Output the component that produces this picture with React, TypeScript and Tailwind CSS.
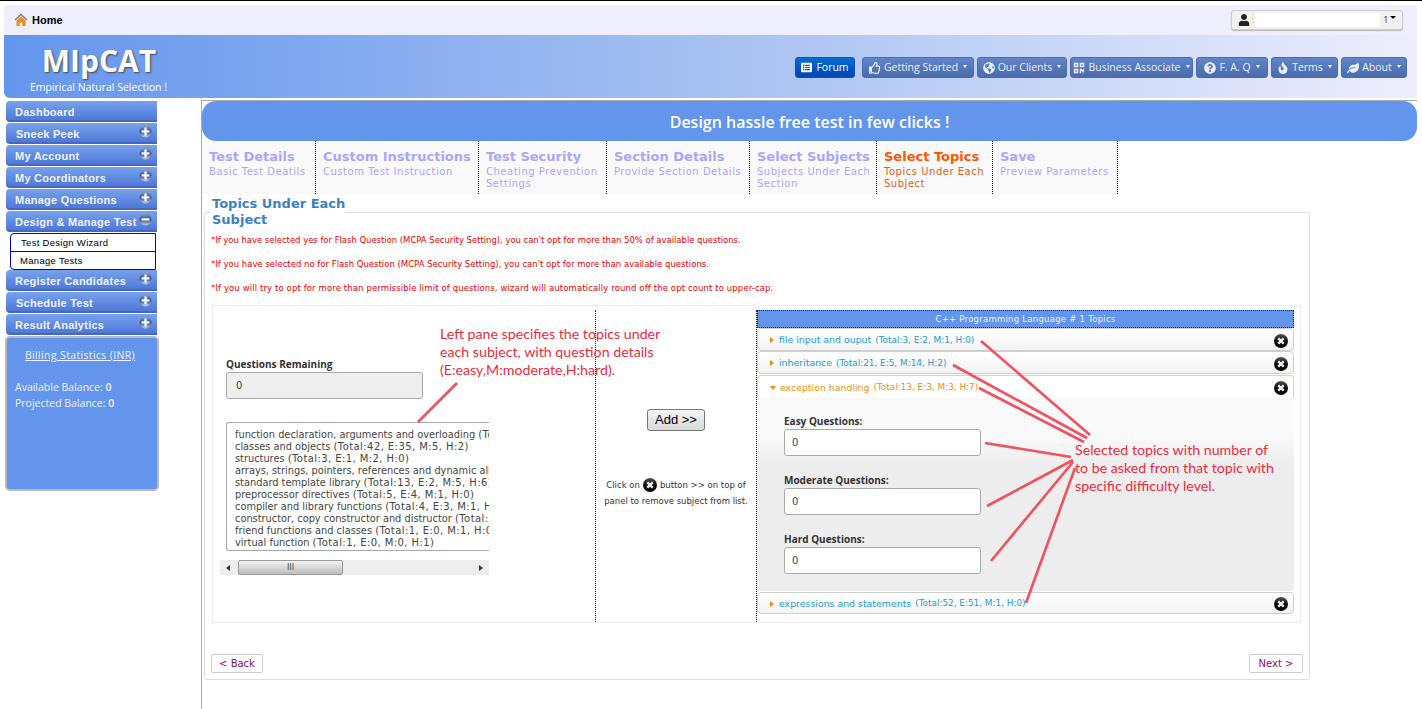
import React from "react";
import { FaUser, FaRegThumbsUp, FaGlobeAmericas, FaQrcode, FaQuestionCircle, FaFire, FaLeaf, FaListAlt } from "react-icons/fa";

const Glyph = ({ minus }: { minus?: boolean }) => (
  <svg width="13" height="13" viewBox="0 0 13 13" className="mt-[-3px] shrink-0">
    <defs>
      <linearGradient id={minus ? "gm" : "gp"} x1="0" y1="0" x2="0" y2="1">
        <stop offset="0" stopColor="#8ea6cf" />
        <stop offset="0.5" stopColor="#2f4f86" />
        <stop offset="1" stopColor="#c5d3ea" />
      </linearGradient>
    </defs>
    <circle cx="6.5" cy="6.5" r="6" fill={`url(#${minus ? "gm" : "gp"})`} />
    <rect x="2.5" y="5.3" width="8" height="2.2" fill="#fff" />
    {!minus && <rect x="5.4" y="2.5" width="2.2" height="8" fill="#fff" />}
  </svg>
);

const MenuItem = ({ label, icon, indent }: { label: string; icon?: "plus" | "minus"; indent?: boolean }) => (
  <div className="flex h-[21px] w-[151px] items-center justify-between rounded-l-[4px] border-b-2 border-[#4468c4] bg-gradient-to-b from-[#78a2ec] to-[#4f78d8] pr-[5px] text-[11px] font-bold text-[#eef3ff] font-['Liberation_Sans',sans-serif] tracking-[0.25px]">
    <span className={`pt-[4px] ${indent ? "pl-[10px]" : "pl-[9px]"}`}>{label}</span>
    {icon && <Glyph minus={icon === "minus"} />}
  </div>
);

const NavButton = ({ icon, label, w }: { icon: React.ReactNode; label: string; w: string }) => (
  <div className={`flex h-[21px] ${w} items-center justify-center gap-[3px] rounded-[3px] border border-[#4a6cae] bg-gradient-to-b from-[#6085c8] to-[#4a6bac] text-[10.5px] text-[#e8effb] font-['Open_Sans',sans-serif]`}>
    {icon}
    <span>{label}</span>
    <span className="ml-[2px] mb-[3px] h-0 w-0 border-x-[2.5px] border-t-[3px] border-x-transparent border-t-white" />
  </div>
);

const Tab = ({ title, sub, w, active }: { title: string; sub: React.ReactNode; w: string; active?: boolean }) => (
  <div className={`${w} h-full shrink-0 border-r border-dotted border-black pl-[7px] pt-[8px] font-['DejaVu_Sans',sans-serif]`}>
    <div className={`text-[13px] font-bold leading-[16px] ${active ? "text-[#ff5500]" : "text-[#aaa6ff]"}`}>{title}</div>
    <div className={`mt-px text-[10px] leading-[12px] tracking-[0.52px] ${active ? "text-[#e2601a]" : "text-[#aaa6ff]"}`}>{sub}</div>
  </div>
);

const CloseIcon = ({ size = 14 }: { size?: number }) => (
  <svg width={size} height={size} viewBox="0 0 14 14" className="shrink-0">
    <defs>
      <linearGradient id="closeGloss" x1="0" y1="0" x2="0" y2="1">
        <stop offset="0" stopColor="#555" />
        <stop offset="0.45" stopColor="#111" />
        <stop offset="1" stopColor="#000" />
      </linearGradient>
    </defs>
    <circle cx="7" cy="7" r="7" fill="url(#closeGloss)" />
    <path d="M4.3 4.3 9.7 9.7M9.7 4.3 4.3 9.7" stroke="#eee" strokeWidth="2.4" />
  </svg>
);

const Row = ({ name, stats, open, h = "h-[23px]" }: { name: string; stats: string; open?: boolean; h?: string }) => (
  <div className={`flex ${h} items-center justify-between pl-[12px] pr-[5px] pt-[2px] border font-['DejaVu_Sans',sans-serif] ${open ? "rounded-t-[4px] border-b-0 border-[#f5d76a] bg-white text-[#ef8f0a]" : "rounded-[4px] border-[#cfcfcf] bg-gradient-to-b from-white to-[#f3f3f3] text-[#1b9cd8]"}`}>
    <div className="flex items-center">
      {open ? (
        <span className="mr-[4px] h-0 w-0 border-x-[3.5px] border-t-[4px] border-x-transparent border-t-[#ee8c10]" />
      ) : (
        <span className="mr-[5px] h-0 w-0 border-y-[3.5px] border-l-[4px] border-y-transparent border-l-[#ee8c10]" />
      )}
      <span className="text-[9.4px]">{name}</span>
      <span className="ml-[4px] text-[8.9px] font-medium">{stats}</span>
    </div>
    <CloseIcon />
  </div>
);

const Field = ({ label, mt }: { label: string; mt: string }) => (
  <div className={mt}>
    <div className="text-[10px] font-bold leading-[12px] text-[#333] font-['Open_Sans',sans-serif]">{label}</div>
    <div className="mt-[2px] flex h-[27px] w-[197px] items-center rounded-[3px] border border-[#aaa] bg-white pl-[7px] text-[10px] text-[#444] font-['DejaVu_Sans',sans-serif]">0</div>
  </div>
);

const topics: [string, string][] = [
  ["function declaration, arguments and overloading", "(Total:17, E:9, M:6, H:2)"],
  ["classes and objects", "(Total:42, E:35, M:5, H:2)"],
  ["structures", "(Total:3, E:1, M:2, H:0)"],
  ["arrays, strings, pointers, references and dynamic allocation", "(Total:9)"],
  ["standard template library", "(Total:13, E:2, M:5, H:6)"],
  ["preprocessor directives", "(Total:5, E:4, M:1, H:0)"],
  ["compiler and library functions", "(Total:4, E:3, M:1, H:0)"],
  ["constructor, copy constructor and distructor", "(Total:7, E:3)"],
  ["friend functions and classes", "(Total:1, E:0, M:1, H:0)"],
  ["virtual function", "(Total:1, E:0, M:0, H:1)"],
  ["operator overloading and type conversion", "(Total:2)"],
];

const sideTop: [string, "plus" | undefined, boolean?][] = [
  ["Dashboard", undefined],
  ["Sneek Peek", "plus", true],
  ["My Account", "plus"],
  ["My Coordinators", "plus"],
  ["Manage Questions", "plus"],
];

export default function App() {
  return (
    <div className="relative h-[709px] w-[1422px] overflow-hidden bg-white">
      <div className="h-px bg-black" />
      <div className="mx-[4px] mt-[4px] mr-[5px]">
        {/* Home bar */}
        <div className="flex h-[30px] items-center justify-between rounded-tl-[5px] bg-[#eeeefc] pl-[10px] pr-[14px]">
          <div className="flex items-center gap-[4px]">
            <svg width="14" height="14" viewBox="0 0 14 14">
              <path d="M1 7 7 1.5 13 7" fill="none" stroke="#7d7d7d" strokeWidth="1.5" />
              <path d="M2.5 7.5 7 3.5 11.5 7.5V13H8.3V9.5H5.7V13H2.5Z" fill="#f58a1f" />
            </svg>
            <span className="text-[11px] font-bold text-black font-['Liberation_Sans',sans-serif]">Home</span>
          </div>
          <div className="flex h-[20px] w-[172px] items-center rounded-[3px] border border-[#ccc] bg-[#f1f1f1] pl-[6px] shadow-[0_1px_1px_#bbb]">
            <FaUser className="h-[12px] w-[12px] text-[#222]" />
            <span className="ml-[2px] text-[8px] leading-none text-[#e2801a]">:</span>
            <span className="ml-[1px] h-[14px] w-[125px] bg-white" />
            <span className="ml-auto text-[8px] leading-none text-[#333]">1</span>
            <span className="ml-[2px] mr-[6px] mb-[6px] h-0 w-0 border-x-[3px] border-t-[3px] border-x-transparent border-t-black" />
          </div>
        </div>
        {/* Header */}
        <div className="flex h-[63px] items-start justify-between rounded-bl-[6px] bg-gradient-to-r from-[#6495ed] via-[#a6c0f1] to-[#eeeefc] pr-[10px]">
          <div className="w-[170px] text-center text-white">
            <div className="pl-[20px] pt-[8px] text-[30px] font-bold leading-[36px] font-['Open_Sans',sans-serif] [text-shadow:1px_1px_2px_#444]">MIpCAT</div>
            <div className="mt-[2px] pl-[19px] text-[10.5px] leading-[13px] font-['Open_Sans',sans-serif]">Empirical Natural Selection !</div>
          </div>
          <div className="mt-[22px] flex gap-[3px]">
            <div className="mr-[4px] flex h-[21px] w-[60px] items-center justify-center gap-[4px] rounded-[3px] border border-[#0b55b4] bg-gradient-to-b from-[#0a6ccf] to-[#0044b8] text-[10.5px] text-white font-['Open_Sans',sans-serif]">
              <FaListAlt className="h-[11px] w-[11px]" />
              Forum
            </div>
            <NavButton w="w-[112px]" icon={<FaRegThumbsUp className="h-[12px] w-[12px]" />} label="Getting Started" />
            <NavButton w="w-[90px]" icon={<FaGlobeAmericas className="h-[12px] w-[12px]" />} label="Our Clients" />
            <NavButton w="w-[123px]" icon={<FaQrcode className="h-[12px] w-[12px]" />} label="Business Associate" />
            <NavButton w="w-[72px]" icon={<FaQuestionCircle className="h-[12px] w-[12px]" />} label="F. A. Q" />
            <NavButton w="w-[67px]" icon={<FaFire className="h-[12px] w-[12px]" />} label="Terms" />
            <NavButton w="w-[66px]" icon={<FaLeaf className="h-[12px] w-[12px]" />} label="About" />
          </div>
        </div>
      </div>

      {/* Main */}
      <div className="mt-[2px] flex">
        {/* Sidebar */}
        <div className="w-[201px] shrink-0 pl-[6px] pt-px">
          <div className="flex flex-col gap-px">
            {sideTop.map(([l, i, ind]) => (
              <MenuItem key={l} label={l} icon={i} indent={ind} />
            ))}
            <MenuItem label="Design & Manage Test" icon="minus" />
          </div>
          <div className="ml-[4px] mt-px w-[146px] rounded-l-[4px] border border-[#0000d0] text-[9.5px] leading-[17px] text-black font-['Liberation_Sans',sans-serif] tracking-[0.3px]">
            <div className="h-[18px] border-b border-[#0000d0] pl-[10px]">Test Design Wizard</div>
            <div className="h-[17px] pl-[9px]">Manage Tests</div>
          </div>
          <div className="flex flex-col gap-px">
            <MenuItem label="Register Candidates" icon="plus" />
            <MenuItem label="Schedule Test" icon="plus" indent />
            <MenuItem label="Result Analytics" icon="plus" />
          </div>
          <div className="ml-[-1px] mt-px h-[155px] w-[154px] rounded-[5px] border-2 border-[#b9b9b9] bg-[#6495ed] text-[10.5px] leading-[16px] text-[#eef3ff] font-['Open_Sans',sans-serif]">
            <div className="pr-[4px] pt-[9px] text-center underline tracking-[0.35px]">Billing Statistics (INR)</div>
            <div className="mt-[16px] pl-[8px]">Available Balance: <b className="font-semibold">0</b></div>
            <div className="pl-[8px]">Projected Balance: <b className="font-semibold">0</b></div>
          </div>
        </div>

        {/* Panel */}
        <div className="mr-[5px] h-[609px] flex-1 border-l border-t border-[#aaa]">
          <div className="flex h-[40px] items-center justify-center rounded-[14px] bg-[#6495ed] pt-px text-[16px] font-semibold text-white font-['Open_Sans',sans-serif]">
            Design hassle free test in few clicks !
          </div>
          <div className="flex h-[53px] w-[916px] bg-[#f9f9f9]">
            <Tab w="w-[114px]" title="Test Details" sub="Basic Test Deatils" />
            <Tab w="w-[163px]" title="Custom Instructions" sub="Custom Test Instruction" />
            <Tab w="w-[128px]" title="Test Security" sub="Cheating Prevention Settings" />
            <Tab w="w-[143px]" title="Section Details" sub="Provide Section Details" />
            <Tab w="w-[127px]" title="Select Subjects" sub="Subjects Under Each Section" />
            <Tab w="w-[116px]" title="Select Topics" sub="Topics Under Each Subject" active />
            <Tab w="w-[125px]" title="Save" sub="Preview Parameters" />
          </div>

          {/* Fieldset */}
          <div className="ml-[2px] mt-[18px] h-[468px] w-[1106px] rounded-[3px] border border-[#ddd] px-[6px]">
            <div className="mt-[-17px] h-[32px] w-[135px] bg-white pl-[1px] text-[13px] font-bold leading-[16px] text-[#3d7fc4] font-['DejaVu_Sans',sans-serif]">
              Topics Under Each Subject
            </div>
            <div className="mt-[6px] font-['DejaVu_Sans',sans-serif] text-[8.5px] leading-[12px] text-[#f00000]">
              <div className="tracking-[-0.035px]">*If you have selected yes for Flash Question (MCPA Security Setting), you can't opt for more than 50% of available questions.</div>
              <div className="mt-[12px] tracking-[0.005px]">*If you have selected no for Flash Question (MCPA Security Setting), you can't opt for more than available questions.</div>
              <div className="mt-[12px] tracking-[0.115px]">*If you will try to opt for more than permissible limit of questions, wizard will automatically round off the opt count to upper-cap.</div>
            </div>

            <div className="ml-px mt-[11px] flex h-[318px] w-[1089px] border border-[#eee] pt-[4px]">
              {/* left pane */}
              <div className="h-full w-[383px] shrink-0 border-r border-dotted border-[#00209f] pl-[7px] font-['DejaVu_Sans',sans-serif]">
                <div className="ml-[6px] pt-[48px] text-[10px] font-bold leading-[12px] text-[#333] font-['Open_Sans',sans-serif]">Questions Remaining</div>
                <div className="ml-[6px] mt-[2px] flex h-[27px] w-[197px] items-center rounded-[3px] border border-[#aaa] bg-[#eee] pl-[9px] text-[10px] text-[#444]">0</div>
                <div className="ml-[6px] mt-[23px] h-[129px] w-[263px] overflow-hidden rounded-l-[3px] border-y border-l border-[#aaa] pl-[8px] pt-[6px] text-[9.8px] leading-[12px] whitespace-nowrap text-[#444]">
                  {topics.map(([name, stats]) => (
                    <div key={name}>
                      {name} <span className="text-[10px] tracking-[0.42px]">{stats}</span>
                    </div>
                  ))}
                </div>
                <div className="mt-[9px] flex h-[15px] w-[269px] items-center bg-[#eeeeee]">
                  <span className="ml-[6px] h-0 w-0 border-y-[3px] border-r-[4px] border-y-transparent border-r-[#333]" />
                  <div className="ml-[8px] flex h-[15px] w-[105px] items-center justify-center rounded-[2px] border border-[#999] bg-gradient-to-b from-[#f3f3f3] to-[#bdbdbd] text-[8px] text-[#444]">III</div>
                  <span className="ml-auto mr-[6px] h-0 w-0 border-y-[3px] border-l-[4px] border-y-transparent border-l-[#333]" />
                </div>
              </div>

              {/* middle */}
              <div className="flex h-full w-[161px] shrink-0 flex-col items-center border-r border-dotted border-[#00209f] font-['DejaVu_Sans',sans-serif]">
                <div className="mt-[99px] flex h-[22px] w-[58px] items-center justify-center rounded-[3px] border border-[#777] bg-gradient-to-b from-[#f5f5f5] to-[#d8d8d8] text-[13px] text-black font-['Liberation_Sans',sans-serif]">Add &gt;&gt;</div>
                <div className="mt-[46px] text-center text-[8.5px] leading-[16px] text-[#333]">
                  <div className="flex items-center justify-center gap-[3px]">Click on <CloseIcon /> button &gt;&gt; on top of</div>
                  <div>panel to remove subject from list.</div>
                </div>
              </div>

              {/* right */}
              <div className="w-[537px] shrink-0">
                <div className="flex h-[18px] items-center justify-center border border-dotted border-[#00209f] bg-[#6495ed] pt-px text-[8.5px] tracking-[0.25px] text-[#eef3ff] font-['DejaVu_Sans',sans-serif]">
                  C++ Programming Language # 1 Topics
                </div>
                <Row name="file input and ouput" stats="(Total:3, E:2, M:1, H:0)" />
                <div className="mb-px">
                  <Row name="inheritance" stats="(Total:21, E:5, M:14, H:2)" />
                </div>
                <Row name="exception handling" stats="(Total:13, E:3, M:3, H:7)" open />
                <div className="h-[193px] rounded-b-[3px] bg-gradient-to-b from-[#f9f9f9] from-[20%] to-[#ededed] to-[35%] pl-[27px] pt-[17px]">
                  <Field label="Easy Questions:" mt="mt-0" />
                  <Field label="Moderate Questions:" mt="mt-[18px]" />
                  <Field label="Hard Questions:" mt="mt-[18px]" />
                </div>
                <div className="mt-px">
                  <Row name="expressions and statements" stats="(Total:52, E:51, M:1, H:0)" h="h-[22px]" />
                </div>
              </div>
            </div>

            <div className="mt-[31px] flex h-[19px] w-[1092px] justify-between text-[10px] text-[#8b0a72] font-['DejaVu_Sans',sans-serif]">
              <div className="flex w-[52px] items-center justify-center rounded-[2px] border border-[#ccc]">&lt; Back</div>
              <div className="flex w-[54px] items-center justify-center rounded-[2px] border border-[#ccc]">Next &gt;</div>
            </div>
          </div>
        </div>
      </div>

      {/* Annotations laid over the screenshot */}
      <svg className="pointer-events-none absolute left-0 top-0" width="1422" height="709" fill="none" stroke="#f2505f" strokeWidth="2.6">
        <path d="M418 422 457 383" />
        <path d="M981 341 1090 435" />
        <path d="M953 365 1087 438" />
        <path d="M979 388 1084 442" />
        <path d="M985 443 1071 457" />
        <path d="M987 506 1073 460" />
        <path d="M991 561 1073 462" />
        <path d="M1026 603 1075 468" />
      </svg>
      <div className="absolute left-[440px] top-[325px] w-[240px] text-[14.2px] leading-[18px] text-[#f02a3c] font-['Lato',sans-serif]">
        Left pane specifies the topics under each subject, with question details (E:easy,M:moderate,H:hard).
      </div>
      <div className="absolute left-[1075px] top-[441px] w-[205px] text-[14.2px] leading-[18px] text-[#f02a3c] font-['Lato',sans-serif]">
        Selected topics with number of to be asked from that topic with specific difficulty level.
      </div>
    </div>
  );
}
